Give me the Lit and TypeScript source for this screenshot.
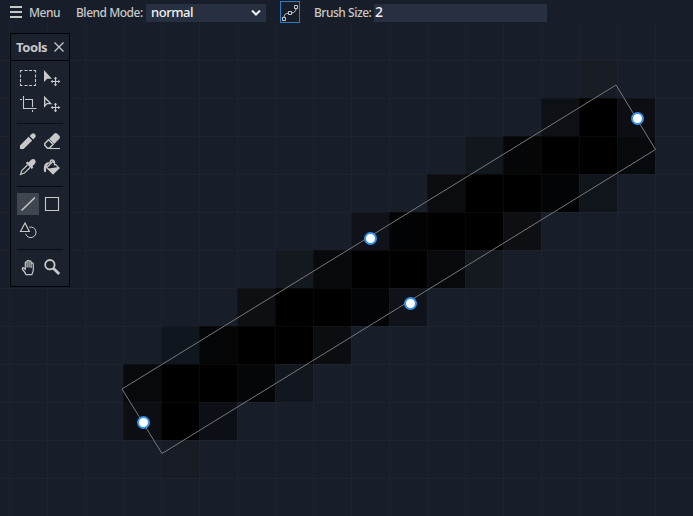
import { LitElement, html, css, svg } from "lit";
import { customElement } from "lit/decorators.js";

const CELL = 38;
const OX = 9;
const OY = 60;

// [column, row, colour]
const cells: [number, number, string][] = [
  [15, 0, "#171b24"],
  [14, 1, "#0d1015"], [15, 1, "#000"], [16, 1, "#0c0e14"],
  [12, 2, "#12171e"], [13, 2, "#050608"], [14, 2, "#000"], [15, 2, "#000"], [16, 2, "#070a0c"],
  [11, 3, "#0b0c10"], [12, 3, "#000"], [13, 3, "#000"], [14, 3, "#030405"], [15, 3, "#10141b"],
  [9, 4, "#0f1218"], [10, 4, "#020304"], [11, 4, "#000"], [12, 4, "#000"], [13, 4, "#0e0f13"],
  [7, 5, "#141920"], [8, 5, "#08090c"], [9, 5, "#000"], [10, 5, "#000"], [11, 5, "#08090c"], [12, 5, "#141920"],
  [6, 6, "#0e0f13"], [7, 6, "#000"], [8, 6, "#000"], [9, 6, "#020405"], [10, 6, "#0f1319"],
  [4, 7, "#10161d"], [5, 7, "#030507"], [6, 7, "#000"], [7, 7, "#000"], [8, 7, "#0a0e11"],
  [3, 8, "#070a0c"], [4, 8, "#000"], [5, 8, "#000"], [6, 8, "#050607"], [7, 8, "#12161e"],
  [3, 9, "#0c0e14"], [4, 9, "#000"], [5, 9, "#0c0f15"],
  [4, 10, "#171b24"],
];
const handles = [[637.5, 118.5], [370.5, 238.5], [410.5, 303.5], [143.5, 422.5]];
const range = (n: number) => Array.from({ length: n }, (_, i) => i);

const moveCross = svg`
  <path stroke-width="1.200" d="M14.500 10.500v8M10.500 14.500h8"/>
  <path fill="currentColor" stroke="none" d="M12.700 11.800l1.800-2.100 1.800 2.100zM12.700 17.200l1.800 2.100 1.800-2.100zM11.800 12.700l-2.100 1.800 2.100 1.800zM17.200 12.700l2.100 1.800-2.100 1.800z"/>`;

const icons: Record<string, unknown> = {
  select: svg`<path stroke-width="1.100" d="M3.500 5.500v-2h2M7.500 3.500h3M12 3.500h3M16.500 3.500h2v2M18.500 7.500v3M18.500 12v3M18.500 16.500v2h-2M15 18.500h-3M10.500 18.500h-3M5.500 18.500h-2v-2M3.500 15v-3M3.500 10.500v-3"/>`,
  move: svg`<path fill="currentColor" stroke="none" d="M3 3v12l3.200-3.200h4.600z"/>${moveCross}`,
  crop: svg`<path stroke-width="1.100" d="M3 6.500h2M6.500 3v12.500h13M8 6.500h7.500v7.500M15.500 17v2"/>`,
  moveOutline: svg`<path stroke-width="1.400" d="M3.700 4.500v8.500l2.300-2.400h3.600z"/>${moveCross}`,
  pencil: svg`<path fill="currentColor" stroke="none" d="M3 19v-3.600L11.600 6.800l3.600 3.600L6.600 19zM12.600 5.900l2.200-2.200q1.400-1.100 2.800.1l.7.800q1.100 1.400 0 2.700L16.200 9.400z"/>`,
  eraser: svg`<path fill="currentColor" stroke="none" d="M8.200 8.800l5.200-5.200q1.300-.9 2.600-.2l2.400 2.300q1.100 1.300.2 2.700L13.200 14z"/><path stroke-width="1.500" d="M7.500 9.700L3.800 13.500v1.800l2.700 2.900h1.800l3.800-3.900z"/><path stroke-width="1.100" d="M9 18.500h10"/>`,
  dropper: svg`<path fill="currentColor" stroke="none" d="M8.800 7l1.600-1.600 1.200 1 2.500-2.600q2.100-1.500 3.900 0 1.500 1.800 0 3.900L15.400 10.300l1 1.200-1.600 1.600z"/><path stroke-width="1.200" d="M10.400 9L4.800 14.600 3.500 18.500l3.900-1.400L13 11.500"/>`,
  bucket: svg`<path fill="currentColor" stroke="none" d="M6.500 12.800L17.500 11l1.200.9-6.700 6.600zM3 15.500q-.7-6 1.500-8 2-1.700 4.300-1.100l-2.600 3Q5 11 5 15.500q-1 1-2 0z"/><path stroke-width="1.300" d="M5.800 11.500l6-6 6 6.400-5.800 5.800zM9 8.500V6q.5-2 2.300-2t2.200 2v3.500"/>`,
  line: svg`<path stroke-width="1.500" d="M4.500 17.500L18 4.500"/>`,
  rect: svg`<path stroke-width="1.100" d="M4.500 4.500h13v13h-13z"/>`,
  shapes: svg`<path stroke-width="1.200" d="M3.500 12.500L8 4l4.300 8.500z"/><path d="M12.300 8.200a5.300 5.300 0 1 1-3.700 6.500"/>`,
  blank: svg``,
  hand: svg`<path stroke-width="1.200" d="M9 18.600Q8 16 5.500 13.500q-.6-1.500.8-1.800L8.300 13.300V6.500q.8-1.500 1.800 0V11.500 5q1-1.500 2 0v6.500V5.500q1-1.400 2 0v6.500V7.500q1.200-1.300 2.200 0v6q0 3-1.500 5.100z"/>`,
  zoom: svg`<circle cx="8.900" cy="8.700" r="4.700" stroke-width="1.800"/><path stroke-width="2.800" d="M12.600 12.400l5.600 5.600"/>`,
};
const groups = [
  ["select", "move", "crop", "moveOutline"],
  ["pencil", "eraser", "dropper", "bucket"],
  ["line", "rect", "shapes", "blank"],
  ["hand", "zoom"],
];

@customElement("app-root")
export class AppRoot extends LitElement {
  static styles = css`
    :host {
      display: grid;
      grid-template: 23px 1fr / 1fr;
      width: 693px;
      height: 516px;
      position: relative;
      overflow: hidden;
      background: #181e29;
      color: #c8c8c8;
      font: 12px/22px "Noto Sans", "Open Sans", sans-serif;
    }
    svg { display: block; fill: none; stroke: currentColor; }
    .canvas { position: absolute; inset: 0; }
    .grid { stroke: rgb(75 60 58 / 0.13); }
    .outline { stroke: #777; }
    .handle { fill: #fff; stroke: #3392ec; stroke-width: 2; }
    .bar {
      position: relative;
      display: flex;
      align-items: center;
      height: 23px;
      padding-left: 10px;
      background: #181e29;
      white-space: nowrap;
    }
    .bar svg { flex: none; }
    .label { height: 22px; line-height: 24px; font-size: 12px; font-weight: 500; }
    .menu { width: 30px; margin-left: 7px; letter-spacing: -0.5px; }
    .blend { width: 67px; margin-left: 17px; letter-spacing: -0.48px; }
    .brush { width: 58px; margin-left: 14px; letter-spacing: -0.48px; }
    .field {
      box-sizing: border-box;
      display: flex;
      align-items: center;
      justify-content: space-between;
      height: 18px;
      margin-top: 2px;
      background: #273040;
      color: #f2f2f2;
      font-weight: 500;
      font-size: 13px;
      line-height: 16px;
      letter-spacing: -0.45px;
    }
    .text { height: 18px; }
    .mode { width: 120px; margin-left: 3px; padding: 0 5px; }
    .size { width: 173px; margin-left: 2px; padding-left: 1px; font-size: 14px; }
    .curve {
      box-sizing: border-box;
      width: 20px;
      height: 22px;
      margin: 1px 0 0 14px;
      border: 1px solid #2c7fc6;
    }
    .tools {
      position: relative;
      box-sizing: border-box;
      width: 60px;
      height: 254px;
      margin: 10px 0 0 10px;
      border: 1px solid #030406;
      background: #1b222d;
    }
    .title {
      box-sizing: border-box;
      display: flex;
      align-items: center;
      justify-content: space-between;
      height: 27px;
      padding: 0 5px;
      border-bottom: 1px solid #030406;
      font-weight: 700;
      font-size: 13px;
      letter-spacing: -0.4px;
    }
    .group {
      display: grid;
      grid-template-columns: 22px 22px;
      grid-auto-rows: 22px;
      gap: 4px 2px;
      margin: 0 6px;
      padding: 6px 0 8px;
    }
    .group + .group { border-top: 1px solid #0b0f15; }
    .tool { height: 22px; }
    .active { background: #40464f; }
  `;

  render() {
    return html`
      <svg class="canvas" width="693" height="516">
        ${cells.map(([c, r, f]) => svg`<rect x=${OX + c * CELL} y=${OY + r * CELL} width="38" height="38" fill=${f} stroke="none"/>`)}
        <g class="grid">
          ${range(18).map((i) => svg`<path d="M${OX + i * CELL + 0.5} 23V516"/>`)}
          ${range(12).map((i) => svg`<path d="M0 ${OY + i * CELL + 0.5}H693"/>`)}
        </g>
        <path class="outline" d="M616 85L655.500 149.500 162 453.500 122 389z"/>
        ${handles.map(([x, y]) => svg`<circle class="handle" cx=${x} cy=${y} r="5.500"/>`)}
      </svg>
      <div class="bar">
        <svg width="12" height="13"><path stroke-width="2" d="M0 2h12M0 7h12M0 12h12"/></svg>
        <span class="label menu">Menu</span>
        <span class="label blend">Blend Mode:</span>
        <div class="field mode">
          <span class="text">normal</span>
          <svg width="10" height="6"><path stroke-width="2" d="M1 .5l4 4 4-4"/></svg>
        </div>
        <div class="curve">
          <svg width="18" height="20"><path d="M1.500 15.500h3v3h-3zM7.500 9.500h3v3h-3zM13.500 3.500h3v3h-3zM3 15.500Q3 11.500 7.500 11M10.500 11Q15 10.500 15 6.500"/></svg>
        </div>
        <span class="label brush">Brush Size:</span>
        <div class="field size"><span class="text">2</span></div>
      </div>
      <div class="tools">
        <div class="title">
          <span>Tools</span>
          <svg width="10" height="10"><path stroke-width="1.300" d="M.5 .5l9 9M9.500 .5l-9 9"/></svg>
        </div>
        ${groups.map((g) => html`<div class="group">
          ${g.map((n) => html`<div class="tool ${n === "line" ? "active" : ""}"><svg width="22" height="22">${icons[n]}</svg></div>`)}
        </div>`)}
      </div>
    `;
  }
}
